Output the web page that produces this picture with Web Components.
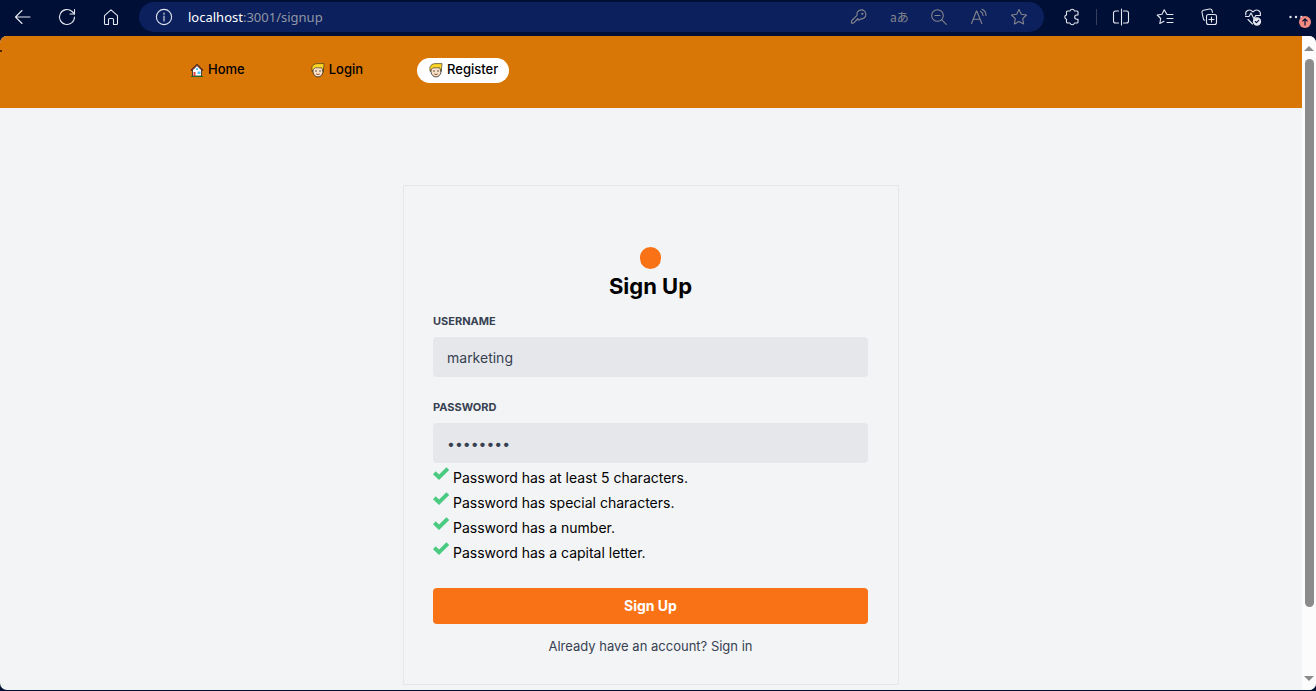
<!DOCTYPE html>
<html lang="en">
<head>
<meta charset="utf-8">
<title>Sign Up</title>
<style>
  html, body { height: 100%; }
  body { margin: 0; background: #000f35; font-family: Inter, "Liberation Sans", sans-serif; color: #000; }
</style>
</head>
<body>
<browser-window>
  <browser-toolbar slot="toolbar"></browser-toolbar>
  <site-nav>
    <nav-link icon="house" href="#home">Home</nav-link>
    <nav-link icon="person" href="#login">Login</nav-link>
    <nav-link icon="person" href="#signup" active>Register</nav-link>
  </site-nav>
  <signup-card>
    <form-field label="Username" name="username" type="text" value="marketing"></form-field>
    <form-field label="Password" name="password" type="password" value="Passw0r!"></form-field>
    <div slot="rules" role="list">
      <rule-item role="listitem">Password has at least 5 characters.</rule-item>
      <rule-item role="listitem">Password has special characters.</rule-item>
      <rule-item role="listitem">Password has a number.</rule-item>
      <rule-item role="listitem">Password has a capital letter.</rule-item>
    </div>
  </signup-card>
</browser-window>

<script>
const define = (name, html, setup) => {
  const template = document.createElement('template');
  template.innerHTML = html;
  customElements.define(name, class extends HTMLElement {
    constructor() {
      super();
      this.attachShadow({ mode: 'open' }).append(template.content.cloneNode(true));
    }
    connectedCallback() { if (setup) setup(this, this.shadowRoot); }
  });
};

const art = {
  back: '<path d="M16 9H1.500M8 2.500 1.500 9 8 15.500"/>',
  reload: '<path d="M16.500 9a7.500 7.500 0 1 1-2.400-5.500L16.500 6"/><path d="M16.500 1.500V6H12"/>',
  home: '<path d="M2.500 7.600 9 1.800l6.500 5.800v7.900a1 1 0 0 1-1 1h-3v-5a1 1 0 0 0-1-1h-3a1 1 0 0 0-1 1v5h-3a1 1 0 0 1-1-1z"/>',
  info: '<circle cx="9" cy="9" r="7.600"/><path d="M9 8v5"/><path d="M9 5v1.300"/>',
  key: '<path d="M8 10.500 3.800 14.800a1 1 0 0 1-.8.3H1.500v-1.800c0-.3.100-.6.300-.8L7 7.300a4.500 4.500 0 1 1 3.800 3.500L9.500 12H8z"/><circle cx="12.300" cy="5.800" r=".6"/>',
  zoomout: '<circle cx="7.500" cy="7.500" r="5.800"/><path d="M5 7.500h5M11.800 11.800l4.500 4.500"/>',
  read: '<path d="M1.500 15.500 6.500 3h.3l5 12.500M3.200 11.300h6.900M10.500 3.300c1.500.7 2.400 2 2.600 4.200M12 1.200c2.600 1 4 3.300 4 6.300"/>',
  star: '<path d="m9 1.500 2.300 4.800 5.200.7-3.800 3.700.9 5.300L9 13.500 4.400 16l.9-5.300L1.500 7l5.200-.7z"/>',
  puzzle: '<path d="M4.500 3h2.600a2.200 2.200 0 0 1 4.300 0H14a1 1 0 0 1 1 1v3h-1.200a2.100 2.100 0 0 0 0 4.200H15V14a1 1 0 0 1-1 1h-2.600a2.200 2.200 0 0 1-4.300 0H4.500a1 1 0 0 1-1-1v-2.800a2.200 2.200 0 0 1 0-4.300V4a1 1 0 0 1 1-1z"/>',
  split: '<path d="M6.500 3H3.500a2 2 0 0 0-2 2v8a2 2 0 0 0 2 2h3M11.500 3h3a2 2 0 0 1 2 2v8a2 2 0 0 1-2 2h-3M9.500 1v16"/>',
  favs: '<path d="M11 6.500 8.200 1.800 6 6.300 1.200 7l3.500 3.500-.9 5 4.200-2.200M11 6.500h6M11 10.500h6M11 14.500h6"/>',
  collect: '<rect x="6.500" y="6.500" width="10" height="10" rx="2"/><path d="M11.500 9v5M9 11.500h5M4.700 12.300a2 2 0 0 1-1.300-1.500L2 4.500a2 2 0 0 1 1.500-2.300l6.300-1.200A2 2 0 0 1 12 2.300l.5 2"/>',
  heart: '<path d="M1.800 7C.9 3.500 5-.2 9 3.800 13-.2 17.200 3.500 16.300 7M4 11.500 8.500 16M1.500 8.500H5L7 5l3 6 1.700-3.500h4.800"/><circle cx="13" cy="13.500" r="3.600" fill="currentColor"/><path stroke="#000f35" d="m11.300 13.500 1.200 1.200 2.200-2.300"/>',
  dots: '<g fill="currentColor" stroke="none"><circle cx="2.500" cy="9" r="1.200"/><circle cx="8" cy="9" r="1.200"/><circle cx="13.500" cy="9" r="1.200"/></g>'
};

define('line-icon', `
  <style>
    :host { display: block; width: 18px; height: 18px; }
    svg { display: block; fill: none; stroke: currentColor; stroke-width: 1.1; stroke-linejoin: round; stroke-linecap: round; }
  </style>
  <svg width="18" height="18" viewBox="0 0 18 18" aria-hidden="true"></svg>`,
  (host, root) => { root.querySelector('svg').innerHTML = art[host.getAttribute('name')]; });

define('browser-toolbar', `
  <style>
    :host { display: flex; align-items: center; height: 36px; padding: 0 10px 2px 14px; box-sizing: border-box; color: #e4e7f0; background: #000f35; }
    button { all: unset; display: block; position: relative; color: inherit; }
    .left { display: flex; gap: 26px; margin-right: 19px; }
    .address { flex: 1; min-width: 0; height: 30px; display: flex; align-items: center; padding: 0 16px; box-sizing: border-box; border-radius: 15px; background: #0b205c; }
    .url { flex: 1; margin-left: 15px; font: 13px/20px "Noto Sans", sans-serif; color: #9296a4; }
    .url b { font-weight: 400; color: #fff; }
    .tools { display: flex; align-items: center; gap: 22px; color: #85858c; }
    .translate { width: 18px; font: 12px/18px "Noto Sans CJK JP", sans-serif; white-space: nowrap; }
    .right { display: flex; align-items: center; gap: 26px; margin-left: 19px; }
    .extensions { display: flex; align-items: center; gap: 15px; margin-right: -11px; }
    .extensions i { width: 1px; height: 16px; background: #36405e; }
    .badge { position: absolute; left: 11px; top: 8px; width: 12px; height: 12px; border-radius: 50%; background: #f28b82; }
    .badge svg { display: block; }
  </style>
  <div class="left">
    <button aria-label="Back"><line-icon name="back"></line-icon></button>
    <button aria-label="Refresh"><line-icon name="reload"></line-icon></button>
    <button aria-label="Home"><line-icon name="home"></line-icon></button>
  </div>
  <div class="address">
    <button aria-label="Site information"><line-icon name="info"></line-icon></button>
    <span class="url"><b>localhost</b>:3001/signup</span>
    <div class="tools">
      <button aria-label="Passwords"><line-icon name="key"></line-icon></button>
      <button class="translate">aあ</button>
      <button aria-label="Zoom"><line-icon name="zoomout"></line-icon></button>
      <button aria-label="Read aloud"><line-icon name="read"></line-icon></button>
      <button aria-label="Add to favorites"><line-icon name="star"></line-icon></button>
    </div>
  </div>
  <div class="right">
    <div class="extensions"><button aria-label="Extensions"><line-icon name="puzzle"></line-icon></button><i></i></div>
    <button aria-label="Split screen"><line-icon name="split"></line-icon></button>
    <button aria-label="Favorites"><line-icon name="favs"></line-icon></button>
    <button aria-label="Collections"><line-icon name="collect"></line-icon></button>
    <button aria-label="Browser essentials"><line-icon name="heart"></line-icon></button>
    <button aria-label="Settings and more"><line-icon name="dots"></line-icon>
      <span class="badge"><svg width="12" height="12" viewBox="0 0 12 12" fill="none" stroke="#000f35" stroke-width="1.200"><path d="M6 9.500V3M3.500 5.300 6 2.800l2.500 2.500"/></svg></span>
    </button>
  </div>`);

define('scroll-rail', `
  <style>
    :host { display: flex; flex-direction: column; align-items: center; gap: 8px; width: 14px; padding: 10px 0 9px; box-sizing: border-box; background: #fcfcfc; }
    .track { flex: 1; width: 9px; }
    .thumb { height: 90%; border-radius: 5px; background: #8b8b8b; }
    svg { display: block; flex: none; }
  </style>
  <svg width="10" height="5" viewBox="0 0 10 5"><path d="M0 5 5 0l5 5z" fill="#8b8b8b"/></svg>
  <div class="track"><div class="thumb"></div></div>
  <svg width="10" height="5" viewBox="0 0 10 5"><path d="M0 0h10L5 5z" fill="#8b8b8b"/></svg>`);

define('browser-window', `
  <style>
    :host { display: flex; flex-direction: column; height: 100vh; padding-bottom: 1px; box-sizing: border-box; }
    .view { flex: 1; min-height: 0; display: flex; overflow: hidden; border-radius: 7px; background: #f3f4f6; }
    .page { flex: 1; min-width: 0; overflow: hidden; }
  </style>
  <slot name="toolbar"></slot>
  <div class="view">
    <div class="page"><slot></slot></div>
    <scroll-rail></scroll-rail>
  </div>`);

define('site-nav', `
  <style>
    :host { display: block; position: relative; height: 72px; background: #d97706; }
    nav { display: flex; gap: 43px; padding: 22px 0 0 178px; }
    :host::before { content: ""; position: absolute; left: 0; top: 14px; width: 2px; height: 2px; background: #4a2a08; }
  </style>
  <nav><slot></slot></nav>`);

const emoji = {
  house: '<path d="M2.500 7v6h9V7L7 2.500z" fill="#fff" stroke="#222" stroke-width=".8"/><path d="M1 7.500 7 1.500l6 6" fill="none" stroke="#2a1a1a" stroke-width="1.200"/><path d="m1.500 7.300 5.500-5.500 5.500 5.500" fill="none" stroke="#e85a4a" stroke-width=".5"/><path d="M3.500 9h2v4h-2z" fill="#e5453a"/><path d="M7.500 8.500h3V11h-3zM6 5.300h2v1.600H6z" fill="#4cc3f0"/><path d="M1 13.500h12" stroke="#1d6b2c"/>',
  person: '<path d="M1.800 6.500c0 4.500 2 7.400 5.200 7.400s5.200-2.900 5.200-7.400L11 3.500H3z" fill="#fbe0c6" stroke="#222" stroke-width=".8"/><path d="M1.200 8.500C-.2 3 2.500.6 7 .6h6c0 2-.5 5-1 7.900l-1.300-3.700H4.200L2.500 6z" fill="#fdd526" stroke="#222" stroke-width=".6"/><circle cx="5" cy="8" r=".7" fill="#222"/><circle cx="9" cy="8" r=".7" fill="#222"/><path d="M5.200 11q1.800 1 3.600 0" fill="none" stroke="#6b3a2a" stroke-width=".8"/>'
};

define('nav-link', `
  <style>
    :host { display: block; }
    a { display: flex; align-items: center; gap: 4px; height: 25px; padding: 0 11px 0 12px; border-radius: 13px; box-sizing: border-box; color: #000; font-size: 13px; font-weight: 500; line-height: 22px; text-decoration: none; white-space: nowrap; }
    :host([active]) a { background: #fff; }
    svg { display: block; }
    span { display: block; height: 25px; }
  </style>
  <a><svg width="14" height="15" viewBox="0 0 14 15" aria-hidden="true"></svg><span><slot></slot></span></a>`,
  (host, root) => {
    root.querySelector('svg').innerHTML = emoji[host.getAttribute('icon')];
    root.querySelector('a').href = host.getAttribute('href');
  });

define('signup-card', `
  <style>
    :host { display: block; padding-top: 77px; }
    form { display: block; width: 100%; max-width: 496px; margin: 0 auto; padding: 61px 30px 29px 29px; box-sizing: border-box; border: 1px solid #e5e7eb; }
    .logo { width: 21px; height: 22px; margin: 0 auto; border-radius: 11px; background: #f97316; }
    h1 { margin: 0 0 9px; font-size: 22px; line-height: 34px; font-weight: 700; text-align: center; }
    button { display: block; width: 100%; height: 36px; margin: 25px 0 13px; padding: 0; border: 0; border-radius: 4px; background: #f97316; color: #fff; font: 700 14px/36px Inter, sans-serif; }
    p { margin: 0; text-align: center; font-size: 13px; line-height: 18px; color: #374151; }
    a { color: inherit; text-decoration: none; }
  </style>
  <form>
    <div class="logo"></div>
    <h1>Sign Up</h1>
    <slot></slot>
    <slot name="rules"></slot>
    <button type="button">Sign Up</button>
    <p>Already have an account? <a href="#login">Sign in</a></p>
  </form>`);

define('form-field', `
  <style>
    :host { display: block; }
    :host(:not(:last-of-type)) { margin-bottom: 21px; }
    label { display: block; margin-bottom: 7px; font-size: 11px; line-height: 18px; font-weight: 700; text-transform: uppercase; color: #374151; }
    input { display: block; width: 100%; height: 40px; padding: 0 14px; box-sizing: border-box; border: 0; border-radius: 4px; background: #e5e7eb; color: #374151; font: 14px/22px Inter, sans-serif; }
  </style>
  <label for="control"></label>
  <input id="control">`,
  (host, root) => {
    root.querySelector('label').textContent = host.getAttribute('label');
    const input = root.querySelector('input');
    input.type = host.getAttribute('type');
    input.name = host.getAttribute('name');
    input.value = host.getAttribute('value');
  });

define('rule-item', `
  <style>
    :host { display: flex; gap: 4px; height: 25px; font-size: 14px; line-height: 29px; }
    svg { display: block; flex: none; margin-top: 3px; }
  </style>
  <svg width="16" height="16" viewBox="0 0 16 16" aria-hidden="true"><path d="M1.300 6.800 6 11.300 14.800 2.600" fill="none" stroke="#4bca81" stroke-width="4"/></svg>
  <span><slot></slot></span>`);
</script>
</body>
</html>
